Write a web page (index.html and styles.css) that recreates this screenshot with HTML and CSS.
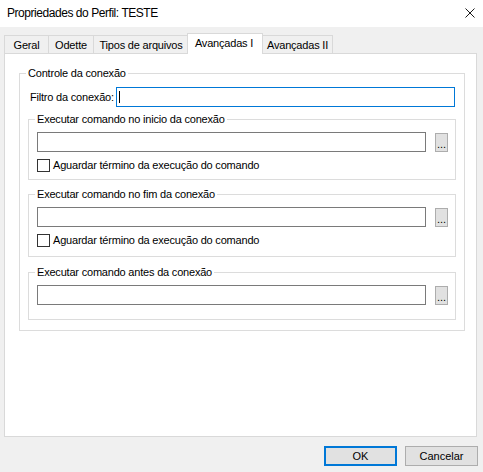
FILE: index.html
```html
<!DOCTYPE html>
<html lang="pt">
<head>
<meta charset="utf-8">
<title>Propriedades do Perfil: TESTE</title>
<link rel="stylesheet" href="styles.css">
</head>
<body>
<div class="dialog">
  <div class="titlebar">
    <span class="title">Propriedades do Perfil: TESTE</span>
    <svg class="close" width="10" height="10" viewBox="0 0 10 10" aria-label="Fechar">
      <path d="M0.5 0.5 L9.5 9.5 M9.5 0.5 L0.5 9.5" stroke="#1a1a1a" stroke-width="1" fill="none"/>
    </svg>
  </div>

  <div class="tabs">
    <div class="tab tab-geral">Geral</div>
    <div class="tab tab-odette">Odette</div>
    <div class="tab tab-tipos">Tipos de arquivos</div>
    <div class="tab tab-av1 active">Avançadas I</div>
    <div class="tab tab-av2">Avançadas II</div>
  </div>

  <div class="panel">
    <fieldset class="group outer">
      <legend>Controle da conexão</legend>
      <div class="filter-row">
        <span class="filter-label">Filtro da conexão:</span>
        <div class="field focused"><span class="caret"></span></div>
      </div>

      <fieldset class="group inner g1">
        <legend>Executar comando no inicio da conexão</legend>
        <div class="cmd-row">
          <div class="field"></div>
          <div class="browse">...</div>
        </div>
        <div class="check"><span class="box"></span><span class="check-label">Aguardar término da execução do comando</span></div>
      </fieldset>

      <fieldset class="group inner g2">
        <legend>Executar comando no fim da conexão</legend>
        <div class="cmd-row">
          <div class="field"></div>
          <div class="browse">...</div>
        </div>
        <div class="check"><span class="box"></span><span class="check-label">Aguardar término da execução do comando</span></div>
      </fieldset>

      <fieldset class="group inner g3">
        <legend>Executar comando antes da conexão</legend>
        <div class="cmd-row">
          <div class="field"></div>
          <div class="browse">...</div>
        </div>
      </fieldset>
    </fieldset>
  </div>

  <div class="buttons">
    <div class="btn default">OK</div>
    <div class="btn">Cancelar</div>
  </div>
</div>
</body>
</html>
```

FILE: styles.css
```css
html, body {
  margin: 0;
  padding: 0;
}

body {
  width: 483px;
  height: 472px;
  overflow: hidden;
  background: #f0f0f0;
  font-family: "Liberation Sans", Arial, sans-serif;
  font-size: 11px;
  letter-spacing: -0.2px;
  color: #000;
}

.dialog {
  width: 483px;
  height: 472px;
}

/* Title bar */
.titlebar {
  height: 27px;
  box-sizing: border-box;
  background: #fff;
  display: flex;
  align-items: center;
  justify-content: space-between;
  padding: 0 8px 2px 7px;
}

.title {
  font-size: 12px;
  letter-spacing: -0.45px;
  white-space: nowrap;
}

.close {
  display: block;
}

/* Tabs */
.tabs {
  display: flex;
  align-items: flex-end;
  height: 18px;
  margin-top: 8px;
  padding-left: 4px;
}

.tab {
  box-sizing: border-box;
  height: 18px;
  border: 1px solid #d9d9d9;
  border-bottom: none;
  margin-left: -1px;
  padding-top: 2px;
  line-height: 15px;
  text-align: center;
  white-space: nowrap;
  background: #f0f0f0;
}

.tab-geral { width: 45px; margin-left: 0; }
.tab-odette { width: 46px; }
.tab-tipos { width: 96px; }
.tab-av1 { width: 76px; margin-left: -2px; }
.tab-av2 { width: 71px; }

.tab.active {
  position: relative;
  z-index: 1;
  height: 21px;
  margin-bottom: -1px;
  background: #fff;
  padding-top: 2px;
  padding-right: 2px;
}

/* Panel */
.panel {
  box-sizing: border-box;
  width: 473px;
  height: 384px;
  margin-left: 4px;
  border: 1px solid #d9d9d9;
  background: #fff;
  padding: 12px 0 0 14px;
}

/* Group boxes */
.group {
  margin: 0;
  border: 1px solid #dcdcdc;
  min-width: 0;
  box-sizing: border-box;
}

.group legend {
  padding: 0 2px;
  margin-left: -2px;
  line-height: 15px;
  white-space: nowrap;
}

.outer {
  width: 446px;
  padding: 6px 8px 10px 8px;
}

.inner {
  width: 100%;
  padding: 5px 7px 7px 8px;
}

.g1 { margin-top: 5px; padding-bottom: 7px; }
.g2 { margin-top: 7px; padding-bottom: 9px; }
.g3 { margin-top: 8px; padding-bottom: 14px; }

/* Filter row */
.filter-row {
  display: flex;
  align-items: center;
  height: 20px;
}

.filter-label {
  flex: 0 0 86px;
  margin-left: 2px;
  white-space: nowrap;
}

.field {
  flex: 1;
  box-sizing: border-box;
  height: 20px;
  border: 1px solid #7a7a7a;
  background: #fff;
}

.field.focused {
  border-color: #0078d7;
  margin-right: 1px;
  padding: 3px 0 0 2px;
}

.caret {
  display: block;
  width: 1px;
  height: 12px;
  background: #000;
}

/* Command rows */
.cmd-row {
  display: flex;
  align-items: flex-end;
  height: 20px;
}

.browse {
  box-sizing: border-box;
  flex: 0 0 13px;
  height: 19px;
  margin-left: 9px;
  border: 1px solid #adadad;
  background: #e1e1e1;
  text-align: center;
  line-height: 19px;
  padding-top: 1px;
  letter-spacing: 0;
  overflow: hidden;
}

/* Checkbox */
.check {
  display: flex;
  align-items: center;
  height: 13px;
  margin-top: 7px;
  line-height: 13px;
}

.box {
  box-sizing: border-box;
  flex: 0 0 13px;
  height: 13px;
  border: 1px solid #333;
  background: #fff;
}

.check-label {
  margin-left: 3px;
  white-space: nowrap;
}

/* Buttons */
.buttons {
  display: flex;
  justify-content: flex-end;
  gap: 8px;
  margin-top: 9px;
  padding-right: 5px;
}

.btn {
  box-sizing: border-box;
  width: 73px;
  height: 20px;
  border: 1px solid #adadad;
  background: #e1e1e1;
  text-align: center;
  line-height: 18px;
  letter-spacing: 0;
}

.btn.default {
  border: 2px solid #0078d7;
  line-height: 16px;
}
```
